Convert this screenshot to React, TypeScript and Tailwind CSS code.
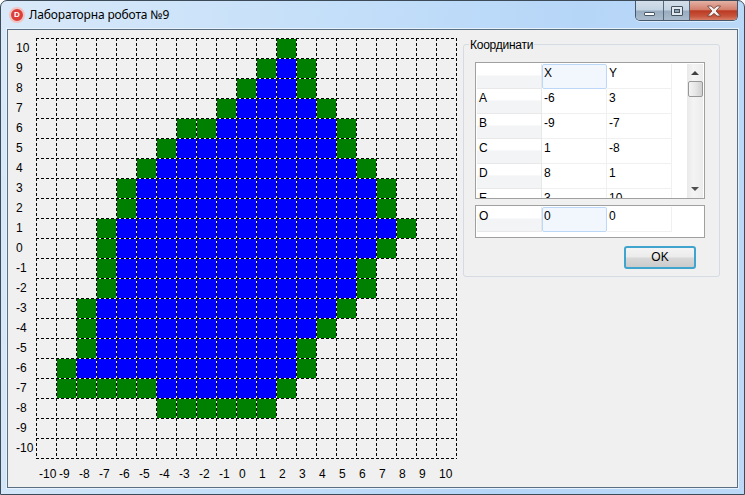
const COLS = Array.from({ length: 21 }, (_, i) => i - 10);
const ROWS = [...COLS].reverse();

// y, green cells, first and last blue cell
const SHAPE: [number, number[], number, number][] = [
  [10, [2], 0, -1],
  [9, [1, 3], 2, 2],
  [8, [0, 3], 1, 2],
  [7, [-1, 4], 0, 3],
  [6, [-3, -2, 5], -1, 4],
  [5, [-4, 5], -3, 4],
  [4, [-5, 6], -4, 5],
  [3, [-6, 7], -5, 6],
  [2, [-6, 7], -5, 6],
  [1, [-7, 8], -6, 7],
  [0, [-7, 7], -6, 6],
  [-1, [-7, 6], -6, 5],
  [-2, [-7, 6], -6, 5],
  [-3, [-8, 5], -7, 4],
  [-4, [-8, 4], -7, 3],
  [-5, [-8, 3], -7, 2],
  [-6, [-9, 3], -8, 2],
  [-7, [-9, -8, -7, -6, -5, 2], -4, 1],
  [-8, [-4, -3, -2, -1, 0, 1], 0, -1],
];

const Plot = () => {
  const cells: { x: number; y: number; fill: string }[] = [];
  SHAPE.forEach(([y, green, from, to]) => {
    green.forEach((x) => cells.push({ x, y, fill: "#008000" }));
    for (let x = from; x <= to; x++) cells.push({ x, y, fill: "#0000ff" });
  });

  return (
    <svg width="421" height="421" className="block" shapeRendering="crispEdges">
      {cells.map((c) => (
        <rect
          key={`${c.x}:${c.y}`}
          x={(c.x + 10) * 20 + 1}
          y={(10 - c.y) * 20 + 1}
          width="19"
          height="19"
          fill={c.fill}
        />
      ))}
      {Array.from({ length: 22 }, (_, i) => (
        <g key={i} stroke="#000" strokeDasharray="3 2">
          <line x1={i * 20 + 0.5} y1="0" x2={i * 20 + 0.5} y2="421" />
          <line x1="0" y1={i * 20 + 0.5} x2="421" y2={i * 20 + 0.5} />
        </g>
      ))}
    </svg>
  );
};

const HeaderCell = ({ label }: { label: string }) => (
  <div className="h-[25px] border-r border-b border-[#e8e8e8] bg-[linear-gradient(#ffffff_0%,#ffffff_45%,#f3f4f5_50%,#f3f4f5_100%)] pl-[2px] pt-[1px]">
    {label}
  </div>
);

const Cell = ({ label, selected }: { label: string; selected?: boolean }) => (
  <div
    className={
      selected
        ? "h-[25px] rounded-[2px] border border-[#bcd8f8] bg-[#f2f7fe] pl-[1px]"
        : "h-[25px] border-r border-b border-[#f0f0f0] pl-[2px] pt-[1px]"
    }
  >
    {label}
  </div>
);

const DATA = [
  ["A", "-6", "3"],
  ["B", "-9", "-7"],
  ["C", "1", "-8"],
  ["D", "8", "1"],
  ["E", "3", "10"],
];

const Scrollbar = () => (
  <div className="ml-auto mr-[1px] flex h-[134px] w-[16px] flex-col items-center bg-[linear-gradient(90deg,#e9e9e9,#f4f4f4_40%,#ececec)]">
    <div className="mt-[7px] h-0 w-0 border-x-[4px] border-b-[4px] border-x-transparent border-b-[#404040]" />
    <div className="mt-[6px] h-[16px] w-[15px] rounded-[2px] border border-[#979797] bg-[linear-gradient(90deg,#f4f4f4,#e6e6e6_50%,#cfcfcf)]" />
    <div className="mb-[7px] mt-auto h-0 w-0 border-x-[4px] border-t-[4px] border-x-transparent border-t-[#505050]" />
  </div>
);

const CaptionButtons = () => (
  <div className="flex h-[20px] w-[103px] overflow-hidden rounded-b-[5px] border border-t-0 border-[#46586c] shadow-[0_1px_0_#ffffff80]">
    <div className="flex w-[28px] items-end justify-center border-r border-[#55677b] bg-[linear-gradient(#d3dfea,#c4d3e2_48%,#99acbf_52%,#a9bbcc)] pb-[4px]">
      <div className="h-[4px] w-[11px] rounded-[1px] border border-[#4b5a6a] bg-white" />
    </div>
    <div className="flex w-[26px] items-center justify-center border-r border-[#55677b] bg-[linear-gradient(#d3dfea,#c4d3e2_48%,#99acbf_52%,#a9bbcc)]">
      <div className="flex h-[10px] w-[12px] items-center justify-center rounded-[1px] border border-[#44525f] bg-[#dfe7ef]">
        <div className="h-[4px] w-[6px] border border-[#44525f] bg-[#8fa3b7]" />
      </div>
    </div>
    <div className="flex flex-1 items-center justify-center bg-[linear-gradient(#e3b2a6,#d47f6c_45%,#bb3a23_52%,#c8543c_80%,#d77f68)]">
      <svg width="16" height="12" viewBox="0 0 16 12">
        <path
          d="M1.5 1h3.5l3 2.6L11 1h3.5l-4.4 5 4.4 5H11L8 8.4 5 11H1.5l4.4-5z"
          fill="#f4f1ef"
          stroke="#6b3a33"
          strokeWidth="0.8"
        />
      </svg>
    </div>
  </div>
);

export default function App() {
  return (
    <div className="flex h-[495px] w-[745px] flex-col overflow-hidden rounded-t-[7px] border border-[#3d4a58] bg-[linear-gradient(100deg,#d9e9f9,#c4dff9_40%,#b6d6f8_70%,#bcd9f7)] font-['Liberation_Sans',sans-serif] text-[12px] leading-[16px] text-black">
      <div className="flex h-[28px] shrink-0 items-start pl-[8px] pr-[6px]">
        <div className="mt-[6px] flex h-[16px] w-[16px] items-center justify-center rounded-full border-2 border-[#f1c4c2] bg-[#dc3f3b] text-[8px] font-bold leading-none text-white">
          D
        </div>
        <span className="ml-[4px] mt-[6px] font-['Noto_Sans',sans-serif] text-[12px] tracking-[-0.15px]">
          Лабораторна робота №9
        </span>
        <div className="ml-auto">
          <CaptionButtons />
        </div>
      </div>

      <div className="ml-[6px] flex h-[459px] w-[731px] border border-[#5b6f82] bg-[#f0f0f0] shadow-[0_0_0_1px_#e6f1fc]">
        <div className="flex w-[455px] shrink-0 flex-col pt-[8px]">
          <div className="flex">
            <div className="flex w-[28px] shrink-0 flex-col pl-[8px]">
              {ROWS.map((y) => (
                <div key={y} className="h-[20px] leading-[20px]">
                  {y}
                </div>
              ))}
            </div>
            <Plot />
          </div>
          <div className="ml-[28px] mt-[7px] grid grid-cols-[repeat(21,20px)]">
            {COLS.map((x) => (
              <div key={x} className="whitespace-nowrap pl-[3px]">
                {x}
              </div>
            ))}
          </div>
        </div>

        <div className="relative mt-[14px] flex h-[233px] w-[257px] flex-col rounded-[3px] border border-[#d4dbe2] pl-[11px] pt-[17px]">
          <span className="absolute left-[5px] top-[-7px] bg-[#f0f0f0] pl-[1px] pr-[1px] leading-[14px] tracking-[-0.25px]">
            Координати
          </span>

          <div className="flex h-[137px] w-[230px] overflow-hidden border border-[#a0a0a0] bg-white pl-[1px] pt-[1px]">
            <div className="grid h-[135px] grid-cols-[65px_65px_65px] content-start overflow-hidden">
              <HeaderCell label="" />
              <Cell label="X" selected />
              <Cell label="Y" />
              {DATA.map(([name, x, y]) => (
                <div key={name} className="contents">
                  <HeaderCell label={name} />
                  <Cell label={x} />
                  <Cell label={y} />
                </div>
              ))}
            </div>
            <Scrollbar />
          </div>

          <div className="mt-[6px] flex h-[33px] w-[230px] border border-[#a0a0a0] bg-white pl-[1px] pt-[1px]">
            <div className="grid grid-cols-[65px_65px_65px] content-start">
              <HeaderCell label="O" />
              <Cell label="0" selected />
              <Cell label="0" />
            </div>
          </div>

          <button className="ml-[149px] mt-[8px] h-[23px] w-[72px] rounded-[3px] border-2 border-[#3fa5cf] bg-[linear-gradient(#f4f4f4,#ebebeb_48%,#d8d8d8_52%,#cbcbcb)] text-center text-[12px] leading-[17px]">
            OK
          </button>
        </div>
      </div>
    </div>
  );
}
